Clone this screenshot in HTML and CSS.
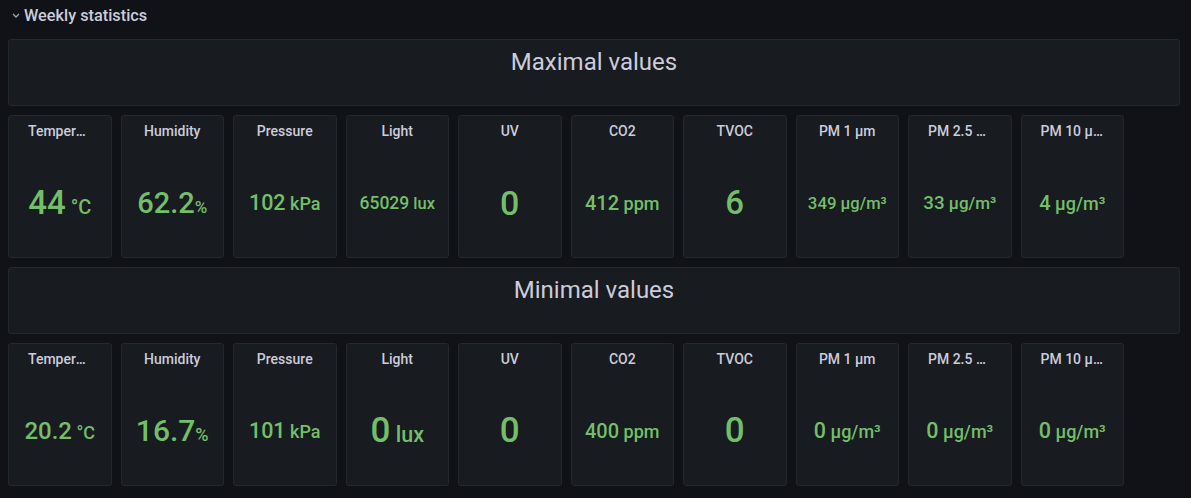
FILE: index.html
```html
<!DOCTYPE html>
<html>
<head>
<meta charset="utf-8">
<link rel="stylesheet" href="styles.css">
</head>
<body>
<div class="dash">
  <div class="row-header">
    <svg class="chev" viewBox="0 0 8 5" width="8" height="5"><path d="M1 1 L4 4 L7 1" fill="none" stroke="#9fa7b3" stroke-width="1.3"/></svg>
    <span>Weekly statistics</span>
  </div>

  <div class="text-panel"><div class="text-content">Maximal values</div></div>

  <div class="stats">
    <div class="stat"><div class="stat-title">Temperature</div><div class="stat-body"><span class="val s33">44<span class="u20"> °C</span></span></div></div>
    <div class="stat"><div class="stat-title">Humidity</div><div class="stat-body"><span class="val s29">62.2<span class="u17">%</span></span></div></div>
    <div class="stat"><div class="stat-title">Pressure</div><div class="stat-body"><span class="val s21">102<span class="u18"> kPa</span></span></div></div>
    <div class="stat"><div class="stat-title">Light</div><div class="stat-body"><span class="val s17b">65029<span class="u16"> lux</span></span></div></div>
    <div class="stat"><div class="stat-title">UV</div><div class="stat-body"><span class="val s34">0</span></div></div>
    <div class="stat"><div class="stat-title">CO2</div><div class="stat-body"><span class="val s20">412<span class="u18"> ppm</span></span></div></div>
    <div class="stat"><div class="stat-title">TVOC</div><div class="stat-body"><span class="val s33">6</span></div></div>
    <div class="stat"><div class="stat-title">PM 1 μm</div><div class="stat-body"><span class="val s17">349<span class="u16"> μg/m³</span></span></div></div>
    <div class="stat"><div class="stat-title">PM 2.5 μm</div><div class="stat-body"><span class="val s19">33<span class="u17"> μg/m³</span></span></div></div>
    <div class="stat"><div class="stat-title">PM 10 μm</div><div class="stat-body"><span class="val s20">4<span class="u18"> μg/m³</span></span></div></div>
  </div>

  <div class="text-panel"><div class="text-content">Minimal values</div></div>

  <div class="stats">
    <div class="stat"><div class="stat-title">Temperature</div><div class="stat-body"><span class="val s24">20.2<span class="u18"> °C</span></span></div></div>
    <div class="stat"><div class="stat-title">Humidity</div><div class="stat-body"><span class="val s30">16.7<span class="u18">%</span></span></div></div>
    <div class="stat"><div class="stat-title">Pressure</div><div class="stat-body"><span class="val s21">101<span class="u18"> kPa</span></span></div></div>
    <div class="stat"><div class="stat-title">Light</div><div class="stat-body"><span class="val s35">0<span class="u21"> lux</span></span></div></div>
    <div class="stat"><div class="stat-title">UV</div><div class="stat-body"><span class="val s35">0</span></div></div>
    <div class="stat"><div class="stat-title">CO2</div><div class="stat-body"><span class="val s20">400<span class="u18"> ppm</span></span></div></div>
    <div class="stat"><div class="stat-title">TVOC</div><div class="stat-body"><span class="val s35">0</span></div></div>
    <div class="stat"><div class="stat-title">PM 1 μm</div><div class="stat-body"><span class="val s21">0<span class="u18"> μg/m³</span></span></div></div>
    <div class="stat"><div class="stat-title">PM 2.5 μm</div><div class="stat-body"><span class="val s21">0<span class="u18"> μg/m³</span></span></div></div>
    <div class="stat"><div class="stat-title">PM 10 μm</div><div class="stat-body"><span class="val s21">0<span class="u18"> μg/m³</span></span></div></div>
  </div>
</div>
</body>
</html>
```

FILE: styles.css
```css
html, body {
  margin: 0;
  padding: 0;
  background: #111217;
}

body {
  width: 1191px;
  height: 498px;
  overflow: hidden;
  font-family: Roboto, "Noto Sans", "Liberation Sans", sans-serif;
}

.dash {
  width: 1172px;
  padding: 0 11px 0 8px;
  display: flex;
  flex-direction: column;
}

.row-header {
  height: 31px;
  margin-bottom: 8px;
  display: flex;
  align-items: center;
  color: #ccccdc;
  font-size: 16.3px;
  font-weight: 500;
}

.chev {
  display: block;
  margin-left: 4px;
  margin-right: 4px;
  flex: none;
}

.text-panel {
  height: 67px;
  box-sizing: border-box;
  background: #181b1f;
  border: 1px solid #24272c;
  border-radius: 3px;
  text-align: center;
  margin-bottom: 9px;
}

.text-content {
  padding-top: 8px;
  font-size: 24px;
  font-weight: 400;
  color: #ccccdc;
}

.stats {
  display: flex;
  gap: 9px;
  margin-bottom: 9px;
}

.stat {
  flex: none;
  width: 103.5px;
  height: 143px;
  box-sizing: border-box;
  background: #181b1f;
  border: 1px solid #24272c;
  border-radius: 3px;
  display: flex;
  flex-direction: column;
}

.stat-title {
  height: 32px;
  line-height: 30px;
  padding: 0 19px;
  font-size: 14px;
  font-weight: 500;
  color: #ccccdc;
  text-align: center;
  white-space: nowrap;
  overflow: hidden;
  text-overflow: ellipsis;
}

.stat-body {
  flex: 1;
  display: flex;
  align-items: center;
  justify-content: center;
}

.val {
  color: #73bf69;
  font-weight: 500;
  white-space: nowrap;
}

.s17 { font-size: 16.8px; }
.s17b { font-size: 17.5px; }
.s18 { font-size: 18px; }
.s19 { font-size: 18.8px; }
.s20 { font-size: 20px; }
.s21 { font-size: 21.5px; }
.s24 { font-size: 24px; }
.s29 { font-size: 29px; }
.s30 { font-size: 30px; }
.s33 { font-size: 33px; }
.s34 { font-size: 34px; }
.s35 { font-size: 35px; }

.u16 { font-size: 16.5px; }
.u17 { font-size: 17px; }
.u18 { font-size: 18px; }
.u20 { font-size: 20px; }
.u21 { font-size: 21.5px; }
```
